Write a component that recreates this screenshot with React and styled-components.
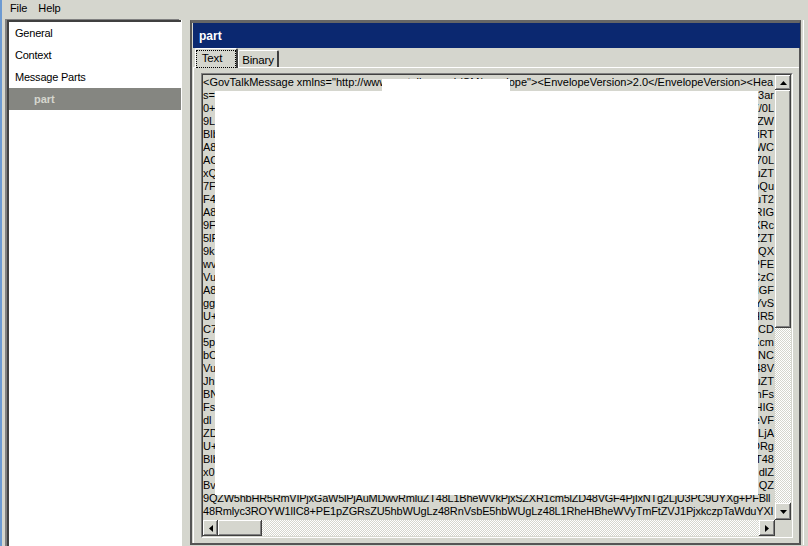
import React from "react";
import styled, { createGlobalStyle } from "styled-components";

const FACE = "#d5d6ce";

const Global = createGlobalStyle`
  html, body { margin: 0; padding: 0; background: ${FACE}; overflow: hidden; }
  body { font-family: "Liberation Sans", Arial, sans-serif; font-size: 11px; color: #000; }
`;

const Win = styled.div`
  width: 808px; height: 546px; box-sizing: border-box; overflow: hidden;
  border-left: 2px solid #6c9ad2; background: ${FACE};
  display: flex; flex-direction: column;
`;
const MenuBar = styled.div`
  height: 18px; flex: none; display: flex; gap: 11px; padding: 0 0 2px 8px; box-sizing: border-box;
  align-items: center; font-size: 11px; letter-spacing: -0.1px;
`;
const Main = styled.div`
  flex: 1; min-height: 0; display: flex; padding: 1px 0 0 3px;
`;
const Nav = styled.div`
  width: 172px; height: 540px; flex: none; background: #fff;
  margin: 1px 1px 0 2px;
  border-left: 2px solid #404040; border-top: 2px solid #404040;
  box-shadow: -2px -1px 0 0 #808080, 1px 0 0 0 #fff;
`;
const NavItem = styled.div`
  height: 22px; display: flex; align-items: center;
  padding-left: ${p => (p.$sub ? 25 : 6)}px;
  background: ${p => (p.$active ? "#858681" : "transparent")};
  color: ${p => (p.$active ? FACE : "#000")};
  font-weight: ${p => (p.$active ? 700 : 400)};
  font-size: 11px; letter-spacing: ${p => (p.$active ? "0" : "-0.22px")};
`;
const Panel = styled.div`
  width: 611px; height: 525px; flex: none; box-sizing: border-box; margin: 1px 0 0 8px;
  border: 2px solid #555; border-width: 3px 2px 2px 2px; border-top-color: #666;
  padding: 0 0 0 1px;
  display: flex; flex-direction: column; box-shadow: 2px 0 0 0 ${FACE}, 3px 0 0 0 #fff;
`;
const Title = styled.div`
  height: 25px; flex: none; width: 607px; background: #0b2870; color: #fff; font-weight: 700; font-size: 12px;
  display: flex; align-items: center; padding-left: 6px; box-sizing: border-box;
`;
const Tabs = styled.div`
  height: 20px; flex: none; display: flex; align-items: flex-end; padding-left: 2px;
  box-shadow: inset 0 -1px 0 #fff;
`;
const Tab = styled.div`
  box-sizing: border-box; display: flex; align-items: center; justify-content: center;
  width: ${p => p.$w}px; height: ${p => (p.$active ? 20 : 17)}px;
  margin-bottom: ${p => (p.$active ? 0 : 1)}px;
  padding-top: ${p => (p.$active ? 0 : 1)}px;
  border-top: 1px solid #fff; border-left: 1px solid #fff;
  border-right: 2px solid #404040; border-radius: 2px 2px 0 0;
  background: ${FACE}; font-size: 11.5px; letter-spacing: -0.15px;
`;
const Focus = styled.span`
  outline: 1px dotted #000; padding: 1px 13px 2px 5px; line-height: 13px;
`;
const TabBody = styled.div`
  flex: 1; min-height: 0; border-left: 1px solid #fff; padding: 5px 0 0 7px;
`;
const TextBox = styled.div`
  box-sizing: border-box; width: 592px; height: 465px;
  border: 1px solid; border-color: #808080 #fff #fff #808080;
  display: flex;
`;
const TextInner = styled.div`
  flex: 1; border: 1px solid; border-color: #404040 ${FACE} ${FACE} #404040;
  display: grid; grid-template-columns: 572px 16px; grid-template-rows: 445px 16px; min-width: 0;
`;
const TextArea = styled.div`
  position: relative; overflow: hidden; padding-top: 1px; box-sizing: border-box; background: ${FACE};
  font-size: 11px; line-height: 13px;
`;
const Line = styled.div`
  display: flex; justify-content: space-between; white-space: nowrap; height: 13px; padding-right: 1px;
  letter-spacing: ${p => p.$track || 0}px;
`;
const Mask = styled.div`
  position: absolute; background: #fff;
  left: ${p => p.$x}px; top: ${p => p.$y}px; width: ${p => p.$w}px; height: ${p => p.$h}px;
`;
const VTrack = styled.div`
  display: flex; flex-direction: column;
  background: repeating-conic-gradient(#fff 0 25%, ${FACE} 0 50%) 0 0 / 2px 2px;
`;
const HTrack = styled(VTrack)`
  flex-direction: row;
`;
const Corner = styled.div`background: ${FACE};`;
const Btn = styled.div`
  box-sizing: border-box; flex: none; background: ${FACE}; display: flex; align-items: center; justify-content: center;
  width: ${p => p.$w}px; height: ${p => p.$h}px;
  margin: ${p => (p.$push ? "auto 0 0 auto" : "0")};
  box-shadow: inset -1px -1px 0 #404040, inset 1px 1px 0 #fff, inset -2px -2px 0 #808080;
`;
const Arrow = styled.svg`display: block; fill: #000;`;

const LEFT = ["s=","0+","9L","Blb","A8","AC","xQ","7F","F4","A8","9F","5lF","9k","wv","Vu","A8","gg","U+","C7","5p","bC","Vu","Jh","BN","Fs","dl","ZD","U+","Blb","x0","Bv"];
const RIGHT = ["3ar","Z/0L","ZW","iRT","vWC","70L","uZT","bQu","uT2","CRIG","XRc","ZZT","uQX","PFE","CzC","iGF","YvS","HR5","qCD","Xcm","INC","48V","uZT","mFs","HIG","eVF","LjA","DRg","T48","dlZ","QZ"];

export default function App() {
  return (
    <Win>
      <Global />
      <MenuBar><span>File</span><span>Help</span></MenuBar>
      <Main>
        <Nav>
          <NavItem>General</NavItem>
          <NavItem>Context</NavItem>
          <NavItem>Message Parts</NavItem>
          <NavItem $sub $active>part</NavItem>
        </Nav>
        <Panel>
          <Title>part</Title>
          <Tabs>
            <Tab $w={43} $active><Focus>Text</Focus></Tab>
            <Tab $w={41}>Binary</Tab>
          </Tabs>
          <TabBody>
            <TextBox>
              <TextInner>
                <TextArea>
                  <Line>{'<GovTalkMessage xmlns="http://www.govtalk.gov.uk/CM/envelope"><EnvelopeVersion>2.0</EnvelopeVersion><Hea'}</Line>
                  {LEFT.map((l, i) => (
                    <Line key={i}><span>{l}</span><span>{RIGHT[i]}</span></Line>
                  ))}
                  <Line $track={-0.24}>9QZW5hbHR5RmVIPjxGaW5lPjAuMDwvRmluZT48L1BheWVkPjxSZXR1cm5lZD48VGF4PjIxNTg2LjU3PC9UYXg+PFBll</Line>
                  <Line $track={-0.14}>48Rmlyc3ROYW1lIC8+PE1pZGRsZU5hbWUgLz48RnVsbE5hbWUgLz48L1RheHBheWVyTmFtZVJ1PjxkczpTaWduYXl</Line>
                  <Mask $x={12} $y={16} $w={543} $h={404} />
                  <Mask $x={179} $y={4} $w={128} $h={12} />
                </TextArea>
                <VTrack>
                  <Btn $w={16} $h={15}><Arrow width="7" height="4" viewBox="0 0 7 4"><path d="M3.5 0L7 4H0z" /></Arrow></Btn>
                  <Btn $w={16} $h={238} />
                  <Btn $w={16} $h={17} $push><Arrow width="7" height="4" viewBox="0 0 7 4"><path d="M0 0h7L3.5 4z" /></Arrow></Btn>
                </VTrack>
                <HTrack>
                  <Btn $w={15} $h={16}><Arrow width="4" height="7" viewBox="0 0 4 7"><path d="M4 0v7L0 3.5z" /></Arrow></Btn>
                  <Btn $w={44} $h={16} />
                  <Btn $w={16} $h={16} $push><Arrow width="4" height="7" viewBox="0 0 4 7"><path d="M0 0l4 3.5L0 7z" /></Arrow></Btn>
                </HTrack>
                <Corner />
              </TextInner>
            </TextBox>
          </TabBody>
        </Panel>
      </Main>
    </Win>
  );
}
